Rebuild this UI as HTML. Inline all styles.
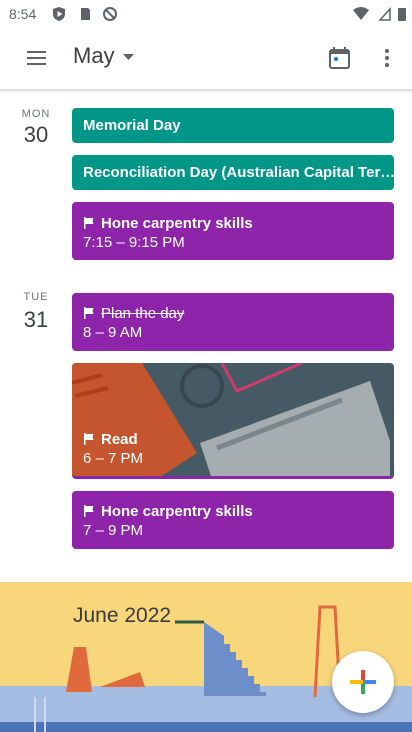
<!DOCTYPE html>
<html><head><meta charset="utf-8"><style>
*{margin:0;padding:0;box-sizing:border-box}
body{width:412px;height:732px;overflow:hidden;background:#fff;font-family:"Liberation Sans",Roboto,sans-serif;position:relative}
.a{position:absolute}
.ev{position:absolute;left:72px;width:322px;border-radius:4px;color:#fff;font-size:15px;font-weight:bold;padding-left:11px}
.g{background:#009688}
.p{background:#8e24aa}
.t{font-weight:normal;font-size:15px}
.flag{display:inline-block;width:12px;height:12px;margin-right:6px;vertical-align:-1px}
.dow{position:absolute;left:0;width:72px;text-align:center;font-size:11px;color:#70757a;letter-spacing:1px}
.dn{position:absolute;left:0;width:72px;text-align:center;font-size:22px;color:#3c4043}
</style></head><body>
<div class="a" style="left:9px;top:6px;font-size:14px;color:#5f6368">8:54</div>
<svg class="a" style="left:53px;top:6px" width="70" height="16"><path d="M6 1l6 2v5c0 4-3 6-6 7-3-1-6-3-6-7V3z" fill="#5f6368"/><path d="M4.5 5v6l5-3z" fill="#fff"/><path d="M28 2h7l2 2v10h-9z" fill="#5f6368"/><circle cx="57" cy="8" r="6" fill="none" stroke="#5f6368" stroke-width="2"/><path d="M53 4l8 8" stroke="#5f6368" stroke-width="2"/></svg>
<svg class="a" style="left:352px;top:6px" width="56" height="16"><path d="M1 4q8-6 16 0l-8 10z" fill="#5f6368"/><path d="M28 14h10V3z" fill="none" stroke="#5f6368" stroke-width="1.5"/><rect x="46" y="2" width="8" height="13" rx="1" fill="#5f6368"/></svg>
<svg class="a" style="left:26px;top:49px" width="22" height="18"><path d="M1 3h19M1 9h19M1 15h19" stroke="#5f6368" stroke-width="2"/></svg>
<div class="a" style="left:73px;top:43px;font-size:22px;color:#3c4043">May</div>
<svg class="a" style="left:123px;top:54px" width="12" height="8"><path d="M0 0h11L5.5 6z" fill="#5f6368"/></svg>
<svg class="a" style="left:328px;top:46px" width="24" height="24"><rect x="2" y="4" width="19" height="18" rx="2" fill="none" stroke="#5f6368" stroke-width="2"/><rect x="2" y="4" width="19" height="4" fill="#5f6368"/><path d="M6 1v4M17 1v4" stroke="#5f6368" stroke-width="2"/><circle cx="8" cy="13" r="2" fill="#1a73e8"/></svg>
<svg class="a" style="left:383px;top:48px" width="8" height="22"><circle cx="4" cy="3" r="2" fill="#5f6368"/><circle cx="4" cy="10" r="2" fill="#5f6368"/><circle cx="4" cy="17" r="2" fill="#5f6368"/></svg>
<div class="a" style="left:0;top:89px;width:412px;height:4px;background:linear-gradient(#d5d5d5,#fff)"></div>

<div class="dow" style="top:108px">MON</div><div class="dn" style="top:122px">30</div>
<div class="ev g" style="top:108px;height:35px;line-height:35px">Memorial Day</div>
<div class="ev g" style="top:155px;height:35px;line-height:35px;white-space:nowrap;overflow:hidden">Reconciliation Day (Australian Capital Ter…</div>
<div class="ev p" style="top:202px;height:58px;padding-top:12px;line-height:19px"><svg class="flag" viewBox="0 0 12 12"><path d="M1 0h1.5v12H1zM2.5 1h8l-1 3 1 3h-8z" fill="#fff"/></svg>Hone carpentry skills<br><span class="t">7:15 – 9:15 PM</span></div>

<div class="dow" style="top:291px">TUE</div><div class="dn" style="top:307px">31</div>
<div class="ev p" style="top:293px;height:58px;padding-top:11px;line-height:19px"><svg class="flag" viewBox="0 0 12 12"><path d="M1 0h1.5v12H1zM2.5 1h8l-1 3 1 3h-8z" fill="#fff"/></svg><span style="text-decoration:line-through;font-weight:normal">Plan the day</span><br><span class="t">8 – 9 AM</span></div>
<div class="ev" style="top:363px;height:116px;background:#455a64;overflow:hidden;padding:0;border-bottom:3px solid #8e24aa">
<svg class="a" style="left:0;top:0" width="322" height="116"><path d="M0 0h70l55 90-40 26H0z" fill="#c4552e"/><path d="M0 20l30-8M3 33l33-8" stroke="#b23b19" stroke-width="4"/><circle cx="130" cy="23" r="20" fill="none" stroke="#37474f" stroke-width="4"/><path d="M150 0l15 28 65-28" fill="none" stroke="#d03a6c" stroke-width="3"/><path d="M128 80l170-62 20 60v38H140z" fill="#a5adb1"/><path d="M145 85l125-48" stroke="#7b868c" stroke-width="5"/></svg>
<div class="a" style="left:11px;top:67px;line-height:19px;color:#fff;font-size:15px;font-weight:bold"><svg class="flag" viewBox="0 0 12 12"><path d="M1 0h1.5v12H1zM2.5 1h8l-1 3 1 3h-8z" fill="#fff"/></svg>Read<br><span class="t">6 – 7 PM</span></div></div>
<div class="ev p" style="top:491px;height:58px;padding-top:11px;line-height:19px"><svg class="flag" viewBox="0 0 12 12"><path d="M1 0h1.5v12H1zM2.5 1h8l-1 3 1 3h-8z" fill="#fff"/></svg>Hone carpentry skills<br><span class="t">7 – 9 PM</span></div>

<div class="a" style="left:0;top:582px;width:412px;height:150px;background:#f8d67c;overflow:hidden">
<div class="a" style="left:0;top:104px;width:412px;height:46px;background:#a6bde3"></div>
<div class="a" style="left:0;top:140px;width:412px;height:10px;background:#4b72b5"></div>
<svg class="a" style="left:0;top:0" width="412" height="150"><path d="M175 40h29M204 40v74h62v-4h-6v-8h-6v-8h-6v-8h-6v-8h-6v-8h-6v-8h-6v-8z" fill="#6d8fc9" stroke="#234" stroke-width="0"/><path d="M175 40h29" stroke="#2e5a44" stroke-width="3"/><path d="M66 110l8-45 12 0 6 45z" fill="#e06a3c"/><path d="M100 105l40-15 5 15z" fill="#e06a3c"/><path d="M315 115l5-90h15l5 90" fill="none" stroke="#e06a3c" stroke-width="3"/><path d="M35 115v35M45 115v35" stroke="#cfd9ee" stroke-width="2"/></svg>
<div class="a" style="left:73px;top:22px;font-size:21px;color:#3c3c3c">June 2022</div>
</div>
<div class="a" style="left:332px;top:651px;width:62px;height:62px;border-radius:50%;background:#fff;box-shadow:0 2px 6px rgba(0,0,0,.3)"></div>
<svg class="a" style="left:348px;top:667px" width="30" height="30"><path d="M15 3v12" stroke="#ea4335" stroke-width="4"/><path d="M15 15h13" stroke="#4285f4" stroke-width="4"/><path d="M15 15v12" stroke="#34a853" stroke-width="4"/><path d="M2 15h13" stroke="#fbbc04" stroke-width="4"/></svg>
</body></html>
